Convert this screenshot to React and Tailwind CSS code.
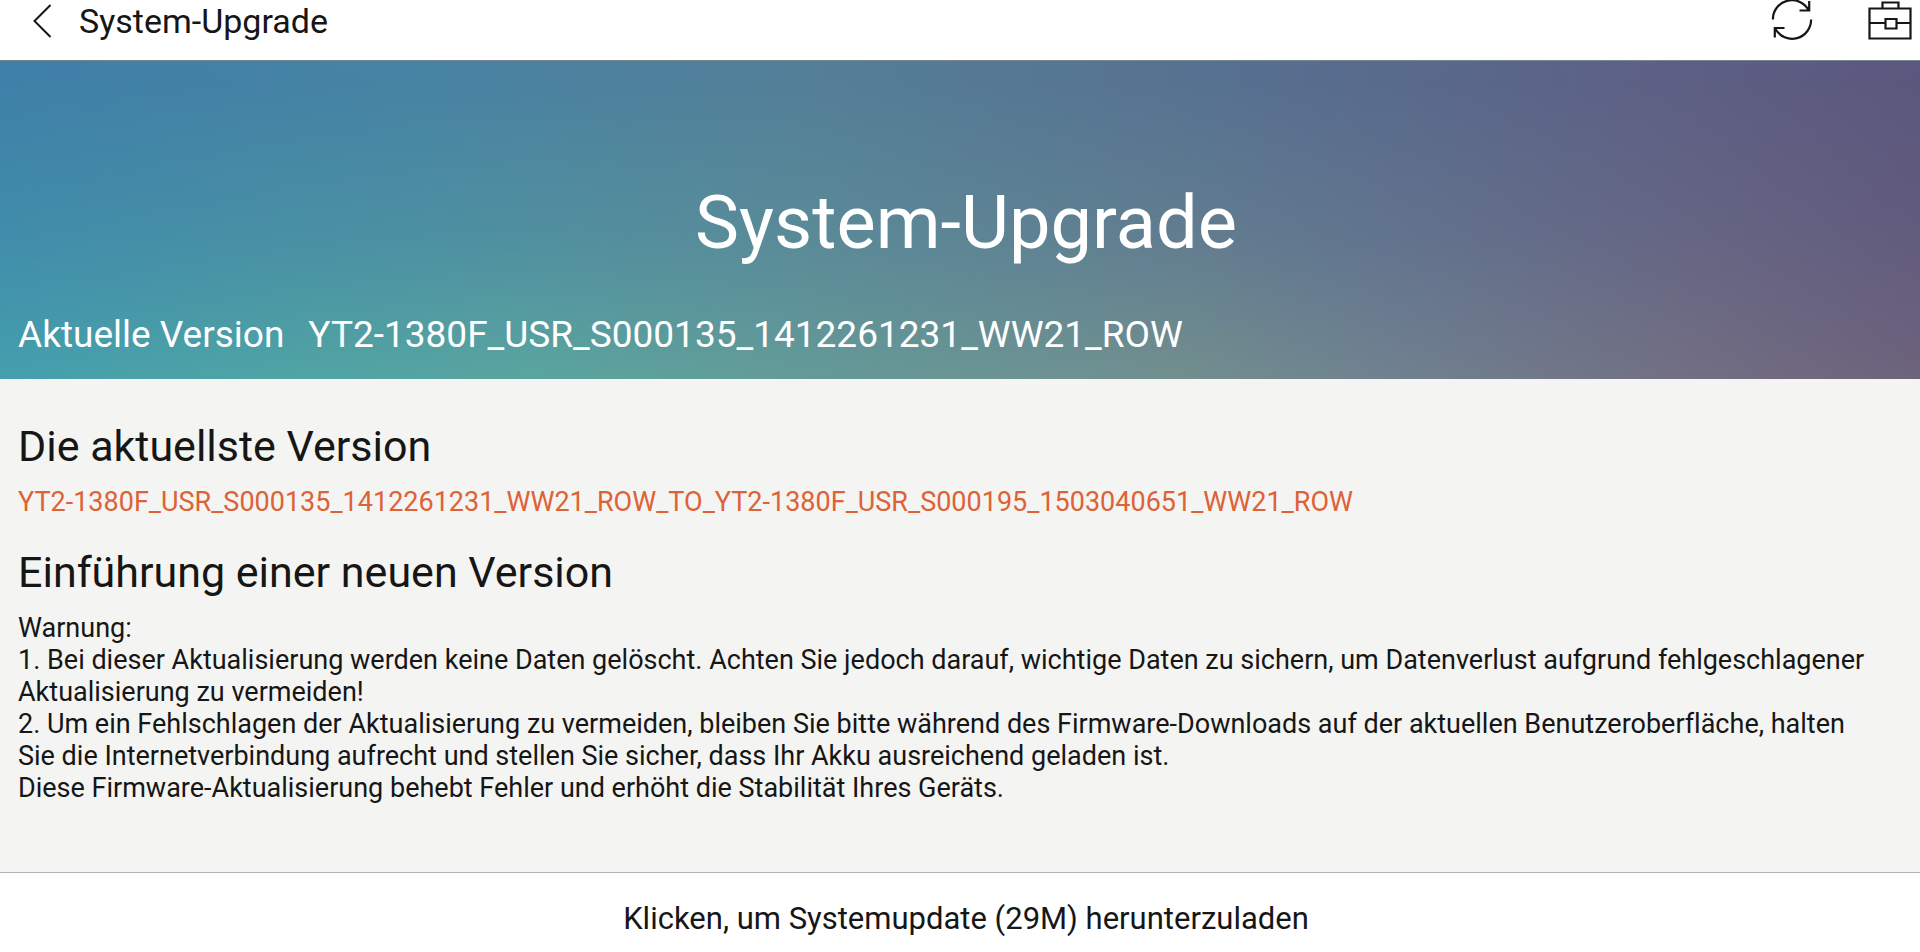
const warnings = [
  "Warnung:",
  "1. Bei dieser Aktualisierung werden keine Daten gelöscht. Achten Sie jedoch darauf, wichtige Daten zu sichern, um Datenverlust aufgrund fehlgeschlagener Aktualisierung zu vermeiden!",
  "2. Um ein Fehlschlagen der Aktualisierung zu vermeiden, bleiben Sie bitte während des Firmware-Downloads auf der aktuellen Benutzeroberfläche, halten Sie die Internetverbindung aufrecht und stellen Sie sicher, dass Ihr Akku ausreichend geladen ist.",
  "Diese Firmware-Aktualisierung behebt Fehler und erhöht die Stabilität Ihres Geräts.",
];

function BackIcon() {
  return (
    <svg width="24" height="40" viewBox="0 0 24 40" fill="none" stroke="currentColor" strokeWidth="2" aria-hidden="true">
      <path d="M20.5 4 4.500 20l16 16" />
    </svg>
  );
}

function RefreshIcon() {
  return (
    <svg width="44" height="40" viewBox="0 0 44 40" fill="none" stroke="currentColor" strokeWidth="2.2" aria-hidden="true">
      <path d="M2.900 19.500A19 19 0 0 1 38.500 10M39.200 1v9.500h-9.700" />
      <path d="M41.100 19.500A19 19 0 0 1 5.500 29M4.800 37.500V28h9.700" />
    </svg>
  );
}

function ToolboxIcon() {
  return (
    <svg width="44" height="40" viewBox="0 0 44 40" fill="none" stroke="currentColor" strokeWidth="2.2" aria-hidden="true">
      <path d="M1.500 8.500h41v30h-41zM14.500 8V2.500h16V8M1.500 23h16M28.500 23h14M17.500 19h11v9.500h-11z" />
    </svg>
  );
}

export default function App() {
  return (
    <div className="flex min-h-screen flex-col bg-[#f4f4f2] font-['Roboto',sans-serif] text-[#161616] [font-variant-ligatures:no-common-ligatures]">
      <header className="flex h-[61px] items-start justify-between border-b border-[#76868f] bg-white pr-2 pl-[30px]">
        <div className="flex items-center gap-[25px]">
          <button type="button" aria-label="Zurück">
            <BackIcon />
          </button>
          <span className="text-[34px] leading-[42px]">System-Upgrade</span>
        </div>
        <div className="flex gap-[54px]">
          <button type="button" aria-label="Aktualisieren">
            <RefreshIcon />
          </button>
          <button type="button" aria-label="Werkzeuge">
            <ToolboxIcon />
          </button>
        </div>
      </header>

      <section className="relative isolate flex h-[318px] flex-col justify-end bg-[linear-gradient(90deg,#3f80a9_0%,#4783a3_22%,#547f98_42%,#576f90_66%,#5d5f84_88%,#5b577e_100%)] px-[18px] text-white">
        <div className="absolute inset-0 -z-10 bg-[linear-gradient(90deg,#449fad_0%,#4fa4a5_14%,#5aa59f_28%,#679896_46%,#728e8e_62%,#708290_72%,#726f83_88%,#6d637c_100%)] mask-[linear-gradient(to_bottom,transparent_5%,rgb(0_0_0/0.4)_55%,black)]" />
        <h1 className="pl-3 text-center text-[74px] leading-[88px]">System-Upgrade</h1>
        <p className="mt-[46px] mb-[22px] flex gap-6 text-[37px] leading-[44px]">
          <span>Aktuelle Version</span>
          <span>YT2-1380F_USR_S000135_1412261231_WW21_ROW</span>
        </p>
      </section>

      <main className="flex-1 pt-[39px] pr-10 pl-[18px]">
        <h2 className="text-[43px] leading-[56px]">Die aktuellste Version</h2>
        <p className="mt-2 text-[27px] leading-[40px] text-[#dd6236]">
          YT2-1380F_USR_S000135_1412261231_WW21_ROW_TO_YT2-1380F_USR_S000195_1503040651_WW21_ROW
        </p>
        <h2 className="mt-[22px] text-[43px] leading-[56px]">Einführung einer neuen Version</h2>
        <div className="mt-3 text-[27px] leading-[32px]">
          {warnings.map((line) => (
            <p key={line}>{line}</p>
          ))}
        </div>
      </main>

      <footer className="border-t border-[#b4b4b4] bg-white">
        <button type="button" className="h-[79px] w-full pt-3 pl-3 text-center text-[31px] leading-[40px]">
          Klicken, um Systemupdate (29M) herunterzuladen
        </button>
      </footer>
    </div>
  );
}
